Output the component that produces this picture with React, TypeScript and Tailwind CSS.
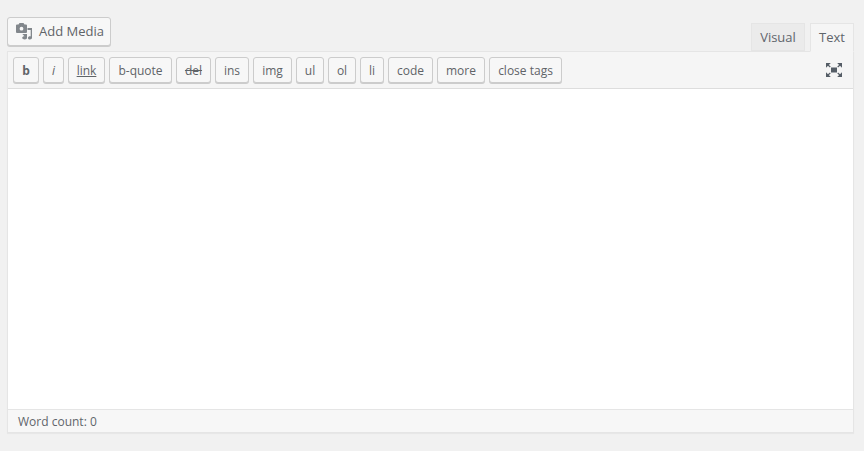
// WordPress classic editor, Text mode

const QUICKTAGS = [
  { label: 'b', w: 'w-[26px]', extra: 'font-bold' },
  { label: 'i', w: 'w-[21px]', extra: 'italic' },
  { label: 'link', w: 'w-[37px]', extra: 'underline' },
  { label: 'b-quote', w: 'w-[63px]', extra: '' },
  { label: 'del', w: 'w-[35px]', extra: 'line-through' },
  { label: 'ins', w: 'w-[34px]', extra: '' },
  { label: 'img', w: 'w-[39px]', extra: '' },
  { label: 'ul', w: 'w-[28px]', extra: '' },
  { label: 'ol', w: 'w-[28px]', extra: '' },
  { label: 'li', w: 'w-[24px]', extra: '' },
  { label: 'code', w: 'w-[45px]', extra: '' },
  { label: 'more', w: 'w-[48px]', extra: '' },
  { label: 'close tags', w: 'w-[73px]', extra: '' },
]

function MediaIcon() {
  return (
    <svg width="18" height="18" viewBox="0 0 18 18" className="text-[#82878c]" fill="currentColor">
      {/* camera */}
      <path
        fillRule="evenodd"
        d="M2 1.500h1.500L4.500 0h4l1 1.500H11a1 1 0 0 1 1 1V9a1 1 0 0 1-1 1H2a1 1 0 0 1-1-1V2.500a1 1 0 0 1 1-1zM6.500 3.800a1.900 1.900 0 1 0 0 3.800 1.900 1.900 0 0 0 0-3.800z"
      />
      {/* notes */}
      <path d="M12.500 5H17v9.800c0 1-.9 1.700-2 1.700s-2-.6-2-1.600.9-1.600 2-1.600c.2 0 .5 0 .7.100V7h-3.200z" />
      <path d="M7.300 11H12v3.800c0 1-.9 1.700-2.200 1.700-1.400 0-2.600-.6-2.600-1.700 0-1 1-1.600 2.300-1.600z" />
    </svg>
  )
}

function FullscreenIcon() {
  return (
    <svg width="16" height="14" viewBox="0 0 16 14" className="text-[#555d66]" fill="currentColor">
      <rect x="5" y="4.500" width="6" height="5" />
      <path d="M0 0h4.800L0 4.800z" />
      <path d="M16 0h-4.800L16 4.800z" />
      <path d="M0 14h4.800L0 9.200z" />
      <path d="M16 14h-4.800L16 9.200z" />
      <path d="M2 2l2.300 2M14 2l-2.300 2M2 12l2.300-2M14 12l-2.300-2" stroke="currentColor" strokeWidth="1.200" />
    </svg>
  )
}

export default function App() {
  return (
    <div className="min-h-[451px] bg-[#f1f1f1] pt-[17px] pr-[10px] pb-[18px] pl-[7px] font-['Open_Sans',sans-serif] text-[13px] text-[#5f656b]">
      <div className="flex items-start justify-between">
        <button className="flex h-[29px] w-[104px] items-center rounded-[3px] border border-[#cccccc] bg-[#f7f7f7] pl-[7px] text-[13px] text-[#5f6468] shadow-[0_1px_0_#cccccc]">
          <MediaIcon />
          <span className="ml-[6px]">Add Media</span>
        </button>
        <div className="relative z-10 mt-[6px] flex items-start gap-[5px]">
          <div className="flex h-[28px] w-[54px] items-center justify-center border border-[#e5e5e5] bg-[#ebebeb] pt-px">
            Visual
          </div>
          <div className="flex h-[29px] w-[44px] items-center justify-center border border-[#e5e5e5] border-b-[#f5f5f5] bg-[#f5f5f5]">
            Text
          </div>
        </div>
      </div>
      <div className="-mt-px border border-[#e5e5e5] bg-white shadow-[0_1px_1px_rgba(0,0,0,0.04)]">
        <div className="flex h-[37px] items-center justify-between border-b border-[#dddddd] bg-[#f5f5f5] pr-[11px] pl-[5px]">
          <div className="flex gap-[4px]">
            {QUICKTAGS.map((t) => (
              <button
                key={t.label}
                className={`flex h-[26px] items-center justify-center rounded-[3px] border border-[#cccccc] bg-[#f7f7f7] pt-px text-[12px] text-[#5f6468] shadow-[0_1px_0_#cccccc] ${t.w} ${t.extra}`}
              >
                {t.label}
              </button>
            ))}
          </div>
          <FullscreenIcon />
        </div>
        <div className="h-[320px] bg-white" />
        <div className="flex h-[23px] items-center border-t border-[#e5e5e5] bg-[#f7f7f7] pt-px pl-[10px] text-[12px]">
          Word count: 0
        </div>
      </div>
    </div>
  )
}
